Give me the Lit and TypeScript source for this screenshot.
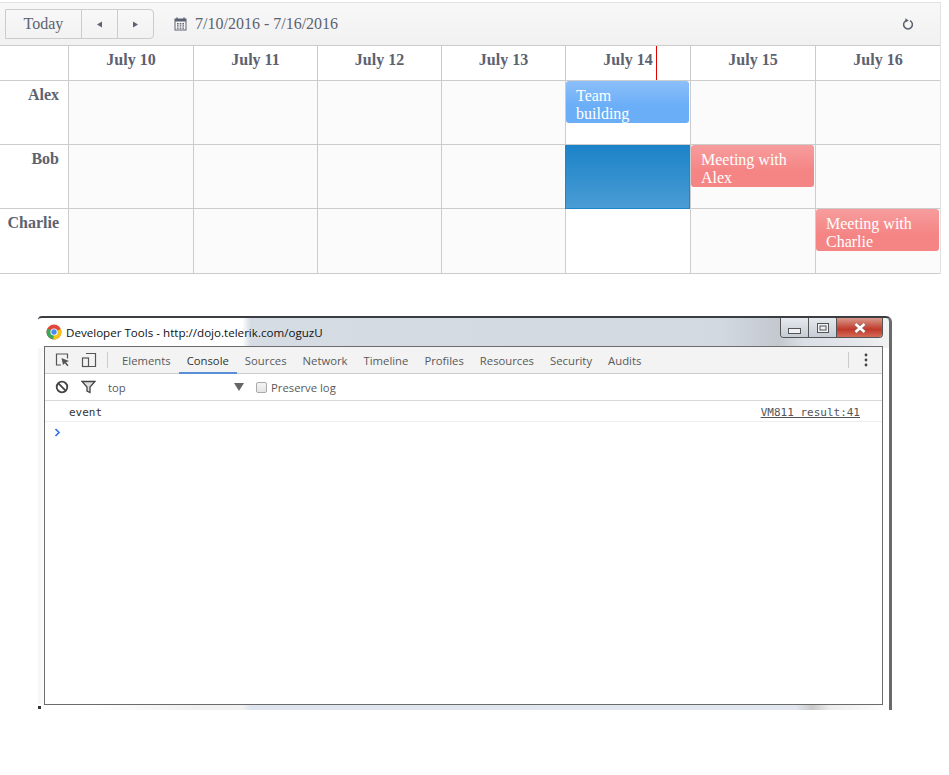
import { LitElement, html, css } from "lit";
import { customElement } from "lit/decorators.js";

const days = ["July 10", "July 11", "July 12", "July 13", "July 14", "July 15", "July 16"];
const rows: { name: string; cells: (string | null)[] }[] = [
  { name: "Alex", cells: [null, null, null, null, "team", null, null] },
  { name: "Bob", cells: [null, null, null, null, "sel", "alex", null] },
  { name: "Charlie", cells: [null, null, null, null, "empty", null, "charlie"] },
];
const tabs = ["Elements", "Console", "Sources", "Network", "Timeline", "Profiles", "Resources", "Security", "Audits"];

@customElement("app-root")
export class AppRoot extends LitElement {
  static styles = css`
    :host { display: block; width: 949px; height: 775px; background: #fff; font-family: "Liberation Serif", serif; overflow: hidden; }
    .cal { width: 941px; margin-top: 2px; border-top: 1px solid #e2e2e2; border-right: 1px solid #e2e2e2; box-sizing: border-box; color: #5c6270; }
    .toolbar { height: 43px; box-sizing: border-box; border-bottom: 1px solid #ccc; display: flex; align-items: center; padding: 0 26px 0 5px; background: linear-gradient(#f8f8f8, #f1f1f1); }
    .btns { display: flex; height: 30px; box-sizing: border-box; border: 1px solid #ccc; border-radius: 0 4px 4px 0; background: linear-gradient(#f8f8f8, #f2f2f2); }
    .btn { display: flex; align-items: center; justify-content: center; width: 36px; box-sizing: border-box; border-left: 1px solid #ccc; }
    .btn.today { width: 75px; border-left: 0; font-size: 16px; color: #5c6270; }
    .range { display: flex; align-items: center; gap: 8px; margin-left: 20px; font-size: 16px; flex: 1; }
    .grid { display: grid; grid-template-columns: 68px 125px 124px 124px 124px 125px 125px 125px; grid-template-rows: 35px 64px 64px 65px; }
    .c { box-sizing: border-box; border-left: 1px solid #ccc; border-bottom: 1px solid #ccc; background: #fbfbfb; min-width: 0; }
    .c.first { border-left: 0; }
    .c.hd { background: #fff; font-weight: bold; font-size: 16px; text-align: center; line-height: 27px; position: relative; }
    .c.label { background: #fff; font-weight: bold; font-size: 16px; text-align: right; padding: 5px 9px 0 0; line-height: 18px; }
    .c.empty { background: #fff; }
    .c.sel { background: linear-gradient(#1b83c8, #4a9cd4); border: 1px solid #1e86cb; border-top: 0; }
    .now { position: absolute; left: 90px; top: 0; bottom: 0; width: 1px; background: #e00000; }
    .ev { width: 123px; height: 42px; box-sizing: border-box; border-radius: 3px; color: #fff; font-size: 16px; line-height: 18px; padding: 6px 6px 0 10px; }
    .ev.blue { background: linear-gradient(#8cbff9, #6aaef8 60%); }
    .ev.red { background: linear-gradient(#f79d9d, #f58585 60%); }
    .win { margin: 42px 0 0 38px; width: 854px; height: 394px; box-sizing: border-box; position: relative; padding: 0 6px 5px 6px;
      border-top: 2px solid #3a3d42; border-right: 3px solid #6a6a6a; border-top-right-radius: 6px; border-top-left-radius: 4px; display: flex; flex-direction: column;
      background:
        linear-gradient(90deg, #fff 0, #fff 24%, #d6dce4 25%, #d3d9e1 80%, #c4c9d0 87%, #dadfe6 90%, #e6e9ed 97%, #f2f2f2 100%) top / 100% 30px no-repeat,
        linear-gradient(90deg, #fff 6%, #f0f0f0 18%, #f2f2f2 24%, #dfe5ee 25%, #e2e7ef 89%, #c9c9c9 91%, #ececec 93%, #fff 100%) bottom / 100% 6px no-repeat,
        linear-gradient(90deg, #f6f6f6, #fff 1%); }
    .win::after { content: ""; position: absolute; left: 0; bottom: 1px; width: 3px; height: 3px; background: #333; }
    .title { height: 28px; flex: none; display: flex; align-items: center; gap: 4px; font-family: "Open Sans", sans-serif; font-size: 11.6px; color: #111; padding-left: 2px; }
    .winbtns { position: absolute; right: 6px; top: 0; display: flex; height: 19px; border: 1px solid #555; border-top: 0; border-radius: 0 0 4px 4px; overflow: hidden; }
    .wb { width: 27px; display: flex; align-items: center; justify-content: center; background: linear-gradient(#e6eaef, #c6ccd4); border-right: 1px solid #555; }
    .wb.min { align-items: flex-end; padding-bottom: 3px; box-sizing: content-box; height: 16px; }
    .wb.close { width: 45px; border-right: 0; background: linear-gradient(#d99a8c, #c0392b 60%, #d46a58); }
    .panel { flex: 1; background: #fff; border: 1px solid #6b6b6b; display: flex; flex-direction: column; font-family: "Open Sans", sans-serif; font-size: 11.3px; color: #5a5a5a; }
    .tabs { height: 27px; box-sizing: border-box; display: flex; align-items: stretch; background: #f3f3f3; border-bottom: 1px solid #ccc; padding-left: 10px; flex: none; }
    .icon { display: flex; align-items: center; width: 26px; }
    .icon.w25 { width: 25px; }
    .icon.w27 { width: 27px; }
    .sep { width: 1px; height: 16px; background: #ccc; align-self: center; margin: 0 6px 0 1px; }
    .tab { padding: 0 8px; display: flex; align-items: center; position: relative; }
    .tab.on { color: #333; }
    .tab.on::after { content: ""; position: absolute; left: 0; right: 0; bottom: -1px; height: 2px; background: #5a8fd8; }
    .more { margin-left: auto; display: flex; align-items: center; }
    .more .bar { width: 1px; height: 16px; background: #ccc; margin-right: 15px; }
    .more svg { margin-right: 14px; }
    .filter { height: 27px; box-sizing: border-box; flex: none; border-bottom: 1px solid #d8d8d8; display: flex; align-items: center; padding-left: 10px; }
    .top { width: 126px; color: #5a5a5a; }
    .tri { width: 0; height: 0; border-left: 5px solid transparent; border-right: 5px solid transparent; border-top: 8px solid #666; margin-right: 12px; }
    .cb { width: 9px; height: 9px; border: 1px solid #aaa; border-radius: 2px; background: linear-gradient(#f4f4f4, #e4e4e4); margin-right: 4px; }
    .line { height: 21px; box-sizing: border-box; flex: none; border-bottom: 1px solid #eee; display: flex; align-items: center; justify-content: space-between; padding: 3px 22px 0 24px; font-family: "DejaVu Sans Mono", monospace; font-size: 11px; color: #333; }
    .line u { color: #555; }
    .prompt { padding: 6px 0 0 9px; height: 12px; }
    .prompt svg { display: block; }
  `;

  ev(kind: string) {
    if (kind === "team") return html`<div class="ev blue">Team<br />building</div>`;
    if (kind === "alex") return html`<div class="ev red">Meeting with Alex</div>`;
    return html`<div class="ev red">Meeting with Charlie</div>`;
  }

  render() {
    return html`
      <div class="cal">
        <div class="toolbar">
          <div class="btns">
            <div class="btn today">Today</div>
            <div class="btn"><svg width="7" height="7" viewBox="0 0 7 7"><path d="M6 .5v6L1 3.5z" fill="#5c6270"/></svg></div>
            <div class="btn"><svg width="7" height="7" viewBox="0 0 7 7"><path d="M1 .5v6l5-3z" fill="#5c6270"/></svg></div>
          </div>
          <div class="range">
            <svg width="13" height="14" viewBox="0 0 13 14"><path d="M3 .5v2M10 .5v2" stroke="#5c6270" stroke-width="1.4" fill="none"/><rect x="1" y="2" width="11" height="11" fill="none" stroke="#5c6270"/><rect x="1" y="2" width="11" height="2.5" fill="#5c6270"/><path d="M3 6h1.6v1.4H3zM5.7 6h1.6v1.4H5.7zM8.4 6H10v1.4H8.4zM3 8.2h1.6v1.4H3zM5.7 8.2h1.6v1.4H5.7zM8.4 8.2H10v1.4H8.4zM3 10.4h1.6v1.4H3zM5.7 10.4h1.6v1.4H5.7zM8.4 10.4H10v1.4H8.4z" fill="#5c6270"/></svg>
            <span>7/10/2016 - 7/16/2016</span>
          </div>
          <svg width="12" height="13" viewBox="0 0 12 13"><path d="M4 2.6a4.4 4.4 0 1 0 4 0" fill="none" stroke="#5c6270" stroke-width="1.5"/><path d="M3.4 .2v4.4l3.4-2.2z" fill="#5c6270"/></svg>
        </div>
        <div class="grid">
          <div class="c hd first"></div>
          ${days.map((d, i) => html`<div class="c hd">${d}${i === 4 ? html`<div class="now"></div>` : ""}</div>`)}
          ${rows.map(
            (r) => html`
              <div class="c label first">${r.name}</div>
              ${r.cells.map((k) => {
                if (k === "sel") return html`<div class="c sel"></div>`;
                if (k === "empty") return html`<div class="c empty"></div>`;
                if (k) return html`<div class="c ${k === "team" ? "empty" : ""}">${this.ev(k)}</div>`;
                return html`<div class="c"></div>`;
              })}
            `
          )}
        </div>
      </div>
      <div class="win">
        <div class="title">
          <svg width="16" height="16" viewBox="0 0 16 16">
            <circle cx="8" cy="8" r="7.5" fill="#e0463a"/>
            <path d="M8 8 L14.8 5 A7.5 7.5 0 0 1 7 15.4z" fill="#f5c518"/>
            <path d="M8 8 L7 15.4 A7.5 7.5 0 0 1 1.4 4.4z" fill="#3aa757"/>
            <circle cx="8" cy="8" r="3.6" fill="#fff"/><circle cx="8" cy="8" r="2.7" fill="#4a8af4"/>
          </svg>
          <span>Developer Tools - http://dojo.telerik.com/oguzU</span>
        </div>
        <div class="winbtns">
          <div class="wb min"><svg width="13" height="6" viewBox="0 0 13 6"><rect x=".5" y=".5" width="12" height="5" fill="#eef1f5" stroke="#555"/></svg></div>
          <div class="wb"><svg width="12" height="10" viewBox="0 0 12 10"><rect x=".5" y=".5" width="11" height="9" fill="#eef1f5" stroke="#555"/><rect x="3" y="3" width="6" height="4" fill="none" stroke="#555"/></svg></div>
          <div class="wb close"><svg width="14" height="10" viewBox="0 0 14 10"><path d="M2.5 1l9 8M11.5 1l-9 8" stroke="#777" stroke-width="3.4" fill="none"/><path d="M2.5 1l9 8M11.5 1l-9 8" stroke="#fff" stroke-width="2.4" fill="none"/></svg></div>
        </div>
        <div class="panel">
          <div class="tabs">
            <div class="icon"><svg width="16" height="16" viewBox="0 0 16 16"><path d="M6 13H1.5V2h11v4.5" fill="none" stroke="#555" stroke-width="1.2"/><path d="M6.5 6l7.5 3-3 1.3 2.5 3-1.2 1-2.5-3L8 13z" fill="#555"/></svg></div>
            <div class="icon w25"><svg width="16" height="16" viewBox="0 0 16 16"><path d="M5 1.5h9.5v13H8" fill="none" stroke="#555" stroke-width="1.2"/><rect x="1.5" y="6" width="6" height="8.5" fill="#f3f3f3" stroke="#555" stroke-width="1.2"/></svg></div>
            <div class="sep"></div>
            ${tabs.map((t) => html`<div class="tab ${t === "Console" ? "on" : ""}">${t}</div>`)}
            <div class="more"><div class="bar"></div><svg width="4" height="14" viewBox="0 0 4 14"><circle cx="2" cy="2" r="1.4" fill="#444"/><circle cx="2" cy="7" r="1.4" fill="#444"/><circle cx="2" cy="12" r="1.4" fill="#444"/></svg></div>
          </div>
          <div class="filter">
            <div class="icon"><svg width="14" height="14" viewBox="0 0 14 14"><circle cx="7" cy="7" r="5.3" fill="none" stroke="#444" stroke-width="1.8"/><path d="M3.2 3.2l7.6 7.6" stroke="#444" stroke-width="1.8"/></svg></div>
            <div class="icon w27"><svg width="15" height="14" viewBox="0 0 15 14"><path d="M1 1.5h13L9 7v5.5L6 11V7z" fill="#ddd" stroke="#444" stroke-width="1.3"/></svg></div>
            <div class="top">top</div>
            <div class="tri"></div>
            <div class="cb"></div>
            <span>Preserve log</span>
          </div>
          <div class="line"><span>event</span><u>VM811 result:41</u></div>
          <div class="prompt"><svg width="7" height="9" viewBox="0 0 7 9"><path d="M1.5 1l3.5 3.5L1.5 8" fill="none" stroke="#2f6fe0" stroke-width="1.6"/></svg></div>
        </div>
      </div>
    `;
  }
}
